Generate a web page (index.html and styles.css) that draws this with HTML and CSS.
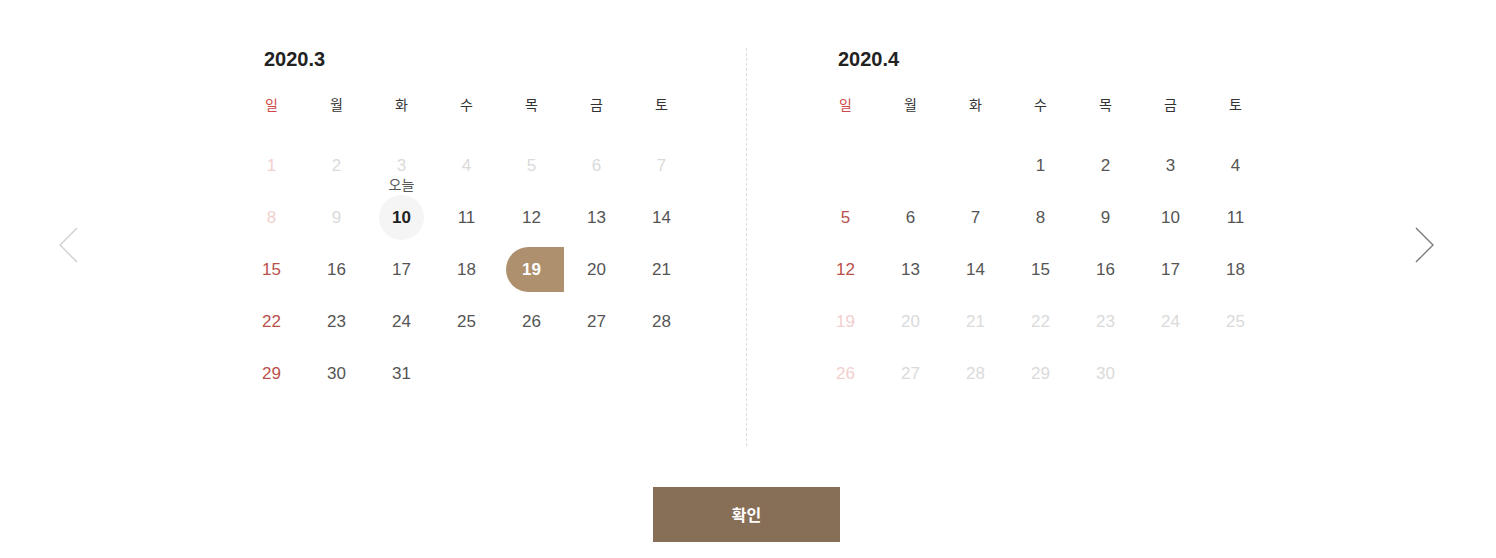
FILE: index.html
```html
<!DOCTYPE html>
<html lang="ko">
<head>
<meta charset="utf-8">
<link rel="stylesheet" href="styles.css">
</head>
<body>
<div class="picker">
  <div class="nav">
    <button class="arrow arrow-prev" aria-label="이전 달">
      <svg width="20" height="36" viewBox="0 0 20 36"><polyline points="18,1 1,18 18,35" fill="none" stroke="#cfcfcf" stroke-width="1.4"/></svg>
    </button>
    <div class="months">
      <section class="month month-left">
        <h2 class="title">2020.3</h2>
        <div class="week">
          <span class="sun">일</span><span>월</span><span>화</span><span>수</span><span>목</span><span>금</span><span>토</span>
        </div>
        <div class="days">
          <div class="day sun off"><span class="num">1</span></div>
          <div class="day off"><span class="num">2</span></div>
          <div class="day off"><span class="num">3</span></div>
          <div class="day off"><span class="num">4</span></div>
          <div class="day off"><span class="num">5</span></div>
          <div class="day off"><span class="num">6</span></div>
          <div class="day off"><span class="num">7</span></div>

          <div class="day sun off"><span class="num">8</span></div>
          <div class="day off"><span class="num">9</span></div>
          <div class="day today"><span class="label">오늘</span><span class="num">10</span></div>
          <div class="day"><span class="num">11</span></div>
          <div class="day"><span class="num">12</span></div>
          <div class="day"><span class="num">13</span></div>
          <div class="day"><span class="num">14</span></div>

          <div class="day sun"><span class="num">15</span></div>
          <div class="day"><span class="num">16</span></div>
          <div class="day"><span class="num">17</span></div>
          <div class="day"><span class="num">18</span></div>
          <div class="day selected"><span class="num">19</span></div>
          <div class="day"><span class="num">20</span></div>
          <div class="day"><span class="num">21</span></div>

          <div class="day sun"><span class="num">22</span></div>
          <div class="day"><span class="num">23</span></div>
          <div class="day"><span class="num">24</span></div>
          <div class="day"><span class="num">25</span></div>
          <div class="day"><span class="num">26</span></div>
          <div class="day"><span class="num">27</span></div>
          <div class="day"><span class="num">28</span></div>

          <div class="day sun"><span class="num">29</span></div>
          <div class="day"><span class="num">30</span></div>
          <div class="day"><span class="num">31</span></div>
        </div>
      </section>
      <section class="month month-right">
        <h2 class="title">2020.4</h2>
        <div class="week">
          <span class="sun">일</span><span>월</span><span>화</span><span>수</span><span>목</span><span>금</span><span>토</span>
        </div>
        <div class="days">
          <div class="day empty"></div>
          <div class="day empty"></div>
          <div class="day empty"></div>
          <div class="day"><span class="num">1</span></div>
          <div class="day"><span class="num">2</span></div>
          <div class="day"><span class="num">3</span></div>
          <div class="day"><span class="num">4</span></div>

          <div class="day sun"><span class="num">5</span></div>
          <div class="day"><span class="num">6</span></div>
          <div class="day"><span class="num">7</span></div>
          <div class="day"><span class="num">8</span></div>
          <div class="day"><span class="num">9</span></div>
          <div class="day"><span class="num">10</span></div>
          <div class="day"><span class="num">11</span></div>

          <div class="day sun"><span class="num">12</span></div>
          <div class="day"><span class="num">13</span></div>
          <div class="day"><span class="num">14</span></div>
          <div class="day"><span class="num">15</span></div>
          <div class="day"><span class="num">16</span></div>
          <div class="day"><span class="num">17</span></div>
          <div class="day"><span class="num">18</span></div>

          <div class="day sun off"><span class="num">19</span></div>
          <div class="day off"><span class="num">20</span></div>
          <div class="day off"><span class="num">21</span></div>
          <div class="day off"><span class="num">22</span></div>
          <div class="day off"><span class="num">23</span></div>
          <div class="day off"><span class="num">24</span></div>
          <div class="day off"><span class="num">25</span></div>

          <div class="day sun off"><span class="num">26</span></div>
          <div class="day off"><span class="num">27</span></div>
          <div class="day off"><span class="num">28</span></div>
          <div class="day off"><span class="num">29</span></div>
          <div class="day off"><span class="num">30</span></div>
        </div>
      </section>
    </div>
    <button class="arrow arrow-next" aria-label="다음 달">
      <svg width="20" height="36" viewBox="0 0 20 36"><polyline points="2,1 19,18 2,35" fill="none" stroke="#7a7a7a" stroke-width="1.4"/></svg>
    </button>
  </div>
  <div class="actions">
    <button class="confirm">확인</button>
  </div>
</div>
</body>
</html>
```

FILE: styles.css
```css
* {
  box-sizing: border-box;
}

html, body {
  margin: 0;
  padding: 0;
  background: #fff;
}

body {
  font-family: "Liberation Sans", Arial, "Noto Sans CJK KR", sans-serif;
  color: #555;
  width: 1496px;
  height: 558px;
  overflow: hidden;
}

.nav {
  display: flex;
  align-items: center;
  padding-left: 59px;
  padding-top: 48px;
}

.arrow {
  border: 0;
  background: none;
  padding: 0;
  width: 20px;
  height: 36px;
  display: flex;
  cursor: pointer;
}

.arrow-prev {
  margin-top: -4px;
}

.arrow-next {
  margin-left: 146px;
  margin-top: -4px;
}

.months {
  display: flex;
  margin-left: 160px;
}

.month {
  width: 455px;
  padding-bottom: 47px;
}

.month-left {
  width: 508px;
  padding-right: 53px;
  border-right: 1px dashed #dcdcdc;
}

.month-right {
  width: 521px;
  padding-left: 66px;
}

.title {
  margin: 0;
  padding-left: 25px;
  font-family: "Liberation Sans", Arial, sans-serif;
  font-weight: bold;
  font-size: 20px;
  line-height: 22px;
  color: #222;
}

.week {
  display: grid;
  grid-template-columns: repeat(7, 65px);
  margin-top: 24px;
  height: 20px;
  font-family: "Noto Sans CJK KR", sans-serif;
  font-size: 14px;
  line-height: 20px;
  color: #333;
  text-align: center;
}

.week .sun {
  color: #cf4a4a;
}

.days {
  display: grid;
  grid-template-columns: repeat(7, 65px);
  grid-auto-rows: 52px;
  margin-top: 25px;
}

.day {
  position: relative;
  display: flex;
  align-items: center;
  justify-content: center;
  font-size: 17px;
  color: #555;
}

.day .num {
  width: 45px;
  height: 45px;
  padding-top: 2px;
  display: flex;
  align-items: center;
  justify-content: center;
  border-radius: 50%;
}

.day.sun {
  color: #b9504c;
}

.day.off {
  color: #dadada;
}

.day.sun.off {
  color: #f2cfcf;
}

.day.today .num {
  background: #f5f5f5;
  color: #222;
  font-weight: bold;
}

.day .label {
  position: absolute;
  top: -16px;
  left: 0;
  right: 0;
  text-align: center;
  font-family: "Noto Sans CJK KR", sans-serif;
  font-size: 14px;
  line-height: 18px;
  color: #555;
}

.day.selected {
  justify-content: flex-start;
}

.day.selected .num {
  flex: 1;
  width: auto;
  margin-left: 6.5px;
  padding-right: 6.5px;
  border-radius: 22.5px 0 0 22.5px;
  background: #ae906e;
  color: #fff;
  font-weight: bold;
}

.actions {
  padding-left: 653px;
  margin-top: 41px;
}

.confirm {
  width: 187px;
  height: 55px;
  padding: 0 0 2px;
  border: 0;
  background: #876f57;
  color: #fff;
  font-family: "Noto Sans CJK KR", sans-serif;
  font-weight: bold;
  font-size: 16px;
  cursor: pointer;
}
```
